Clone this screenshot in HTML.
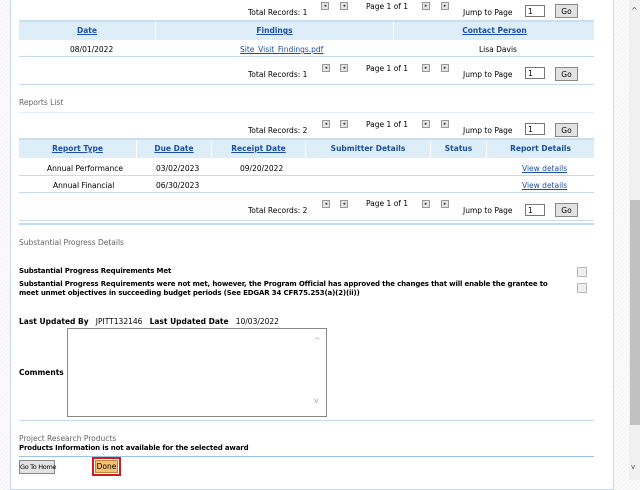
<!DOCTYPE html>
<html><head><style>
body{margin:0;width:640px;height:480px;overflow:hidden;position:relative;font-family:"DejaVu Sans","Liberation Sans",sans-serif;font-size:7.5px;color:#000;
background:repeating-linear-gradient(135deg,#f4f4f4 0 1px,#fbfbfb 1px 3px);}
.a{position:absolute;white-space:nowrap}
#panel{position:absolute;left:10px;top:-2px;width:602px;height:490px;background:#fff;border:1px solid #c9d9ea}
.ln{position:absolute;left:19px;width:575px;height:1px;background:#c5dcf0}
.ic{position:absolute;width:6px;height:6px;border:1px solid #999;background:#e4e4e4;font-size:5px;line-height:6px;text-align:center;color:#333}
.inp{position:absolute;width:20px;height:12px;border:1px solid #777;background:#fff;font-size:7.5px;line-height:12px;padding-left:2px;box-sizing:border-box}
.go{position:absolute;width:23px;height:14px;border:1px solid #888;background:#e2e2e2;text-align:center;line-height:13px;box-sizing:border-box}
.hd{position:absolute;height:18px;background:#deeef8;border-top:2px solid #c8dff0}
.hc{position:absolute;top:0;height:18px;line-height:18px;text-align:center;font-weight:bold;color:#1a4f9c;border-right:1px solid #fff}
.u{text-decoration:underline;color:#1b4fa8}
.cb{position:absolute;width:8px;height:8px;border:1px solid #bbb;background:#eee}
.g{color:#666}
.b{font-weight:bold}
.bt{font-size:7px;letter-spacing:-0.15px}
</style></head><body>
<div id="panel"></div>

<div class="a" style="left:248px;top:8px">Total Records: 1</div>
<div class="ic" style="left:321px;top:2px">◂</div><div class="ic" style="left:340px;top:2px">◂</div>
<div class="a" style="left:366px;top:2px">Page 1 of 1</div>
<div class="ic" style="left:422px;top:2px">▸</div><div class="ic" style="left:441px;top:2px">▸</div>
<div class="a" style="left:463px;top:8px">Jump to Page</div>
<div class="inp" style="left:525px;top:5px">1</div><div class="go" style="left:555px;top:4px">Go</div>

<div class="hd" style="left:19px;top:20px;width:575px">
<div class="hc" style="left:0;width:136px"><span class="u">Date</span></div>
<div class="hc" style="left:137px;width:237px"><span class="u">Findings</span></div>
<div class="hc" style="left:376px;width:199px;border:none"><span class="u">Contact Person</span></div>
</div>
<div class="a" style="left:70px;top:45px">08/01/2022</div>
<div class="a u" style="left:240px;top:45px">Site_Visit_Findings.pdf</div>
<div class="a" style="left:479px;top:45px">Lisa Davis</div>
<div class="ln" style="top:56px"></div>

<div class="a" style="left:248px;top:70px">Total Records: 1</div>
<div class="ic" style="left:322px;top:64px">◂</div><div class="ic" style="left:340px;top:64px">◂</div>
<div class="a" style="left:366px;top:64px">Page 1 of 1</div>
<div class="ic" style="left:422px;top:64px">▸</div><div class="ic" style="left:441px;top:64px">▸</div>
<div class="a" style="left:463px;top:70px">Jump to Page</div>
<div class="inp" style="left:525px;top:67px">1</div><div class="go" style="left:555px;top:67px">Go</div>
<div class="ln" style="top:84px"></div>

<div class="a g" style="left:19px;top:98px">Reports List</div>
<div class="ln" style="top:112px;background:#e4eef7"></div>

<div class="a" style="left:248px;top:126px">Total Records: 2</div>
<div class="ic" style="left:322px;top:120px">◂</div><div class="ic" style="left:340px;top:120px">◂</div>
<div class="a" style="left:366px;top:120px">Page 1 of 1</div>
<div class="ic" style="left:422px;top:120px">▸</div><div class="ic" style="left:441px;top:120px">▸</div>
<div class="a" style="left:463px;top:126px">Jump to Page</div>
<div class="inp" style="left:525px;top:123px">1</div><div class="go" style="left:555px;top:123px">Go</div>

<div class="hd" style="left:19px;top:138px;width:575px">
<div class="hc" style="left:0;width:117px"><span class="u">Report Type</span></div>
<div class="hc" style="left:118px;width:74px"><span class="u">Due Date</span></div>
<div class="hc" style="left:193px;width:93px"><span class="u">Receipt Date</span></div>
<div class="hc" style="left:287px;width:124px">Submitter Details</div>
<div class="hc" style="left:412px;width:55px">Status</div>
<div class="hc" style="left:468px;width:107px;border:none">Report Details</div>
</div>
<div class="a" style="left:47px;top:164px">Annual Performance</div>
<div class="a" style="left:156px;top:164px">03/02/2023</div>
<div class="a" style="left:240px;top:164px">09/20/2022</div>
<div class="a u" style="left:522px;top:164px">View details</div>
<div class="ln" style="top:175px"></div>
<div class="a" style="left:53px;top:181px">Annual Financial</div>
<div class="a" style="left:156px;top:181px">06/30/2023</div>
<div class="a u" style="left:522px;top:181px">View details</div>
<div class="ln" style="top:192px"></div>

<div class="a" style="left:248px;top:206px">Total Records: 2</div>
<div class="ic" style="left:322px;top:200px">◂</div><div class="ic" style="left:340px;top:200px">◂</div>
<div class="a" style="left:366px;top:199px">Page 1 of 1</div>
<div class="ic" style="left:422px;top:200px">▸</div><div class="ic" style="left:441px;top:200px">▸</div>
<div class="a" style="left:463px;top:206px">Jump to Page</div>
<div class="inp" style="left:525px;top:204px">1</div><div class="go" style="left:555px;top:203px">Go</div>
<div class="ln" style="top:220px"></div>
<div class="ln" style="top:223px;height:2px"></div>

<div class="a g" style="left:19px;top:238px">Substantial Progress Details</div>
<div class="a b bt" style="left:19px;top:267px">Substantial Progress Requirements Met</div>
<div class="cb" style="left:577px;top:267px"></div>
<div class="a b bt" style="left:19px;top:280px;line-height:9px">Substantial Progress Requirements were not met, however, the Program Official has approved the changes that will enable the grantee to<br>meet unmet objectives in succeeding budget periods (See EDGAR 34 CFR75.253(a)(2)(ii))</div>
<div class="cb" style="left:577px;top:283px"></div>

<div class="a" style="left:19px;top:317px"><b>Last Updated By</b>&nbsp;&nbsp; JPITT132146 &nbsp;&nbsp;<b>Last Updated Date</b> &nbsp;&nbsp;10/03/2022</div>
<div class="a b" style="left:19px;top:368px">Comments</div>
<div class="a" style="left:67px;top:328px;width:258px;height:87px;border:1px solid #888;background:#fff"></div>
<div class="a" style="left:314px;top:336px;color:#aaa;font-size:8px">^</div>
<div class="a" style="left:314px;top:396px;color:#aaa;font-size:8px">v</div>
<div class="ln" style="top:420px"></div>

<div class="a g" style="left:19px;top:434px">Project Research Products</div>
<div class="a b bt" style="left:19px;top:444px">Products Information is not available for the selected award</div>
<div class="ln" style="top:456px;background:#9cc3e6"></div>
<div class="a" style="left:19px;top:460px;width:36px;height:14px;border:1px solid #888;background:#e2e2e2;text-align:center;line-height:13px;box-sizing:border-box;font-size:6.5px;letter-spacing:-0.3px">Go To Home</div>
<div class="a" style="left:92px;top:457px;width:29px;height:19px;border:2px solid #d41a1a;box-sizing:border-box;background:#fff"></div>
<div class="a" style="left:95px;top:460px;width:23px;height:13px;border:1px solid #b98a3a;background:#f8c070;text-align:center;line-height:12px;box-sizing:border-box">Done</div>

<div class="a" style="left:629px;top:0;width:11px;height:480px;background:#f0f0f0"></div>
<div class="a" style="left:630px;top:200px;width:10px;height:225px;background:#c1c1c1"></div>
<div class="a" style="left:631px;top:6px;color:#555;font-size:8px">^</div>
<div class="a" style="left:631px;top:463px;color:#555;font-size:7px">v</div>
</body></html>
